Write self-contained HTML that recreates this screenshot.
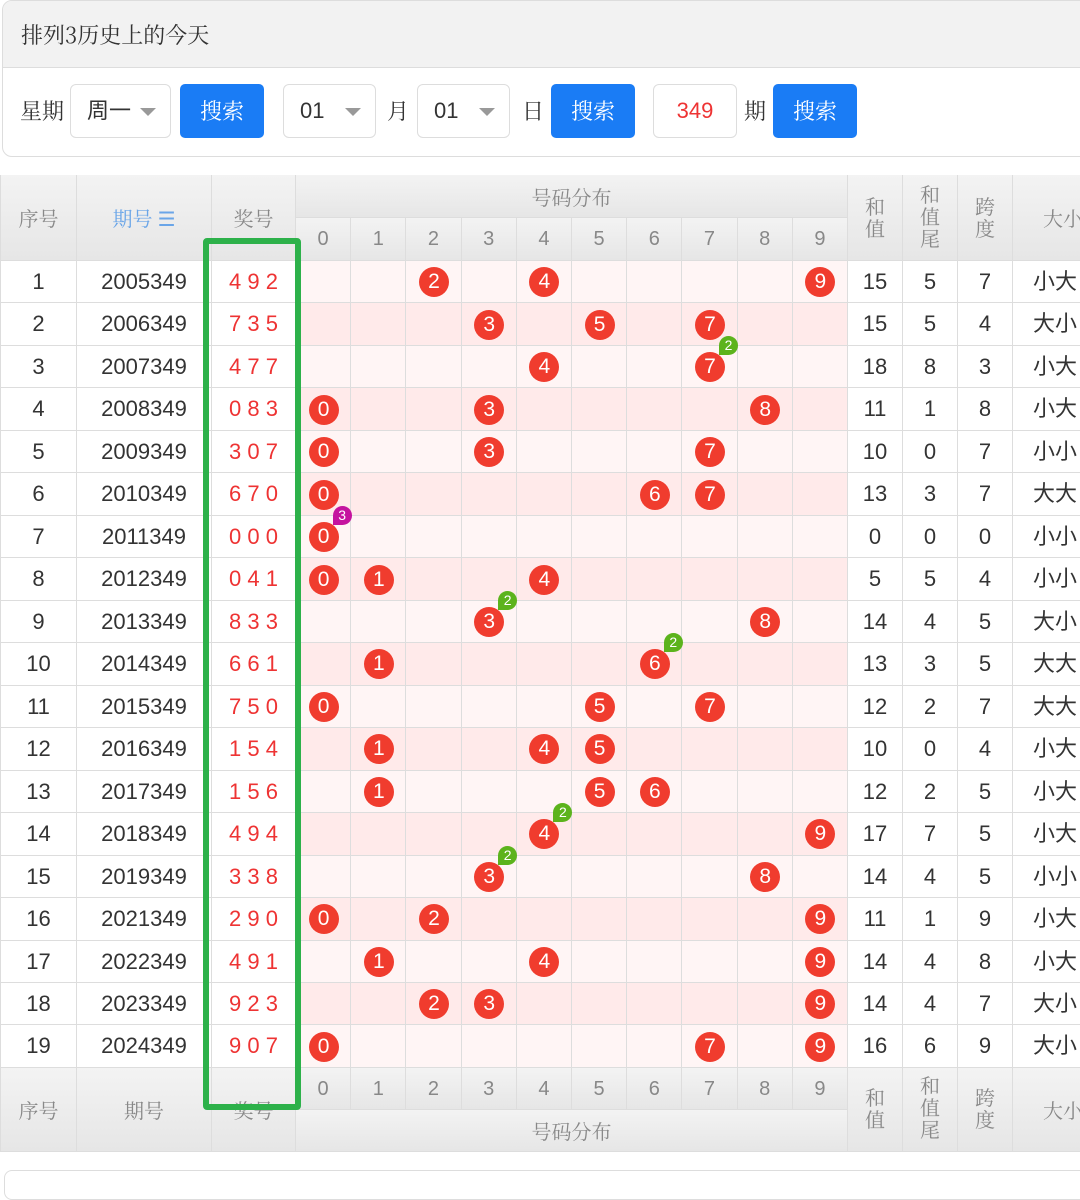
<!DOCTYPE html>
<html><head><meta charset="utf-8">
<style>
*{margin:0;padding:0;box-sizing:border-box}
body{width:1080px;height:1176px;overflow:hidden;background:#fff;font-family:"Liberation Sans","Noto Sans CJK SC",sans-serif;position:relative}
.card{position:absolute;left:2px;top:0;width:1090px;height:157px;border:1px solid #ddd;border-radius:10px;overflow:hidden}
.card .hd{height:67px;background:#f2f2f2;border-bottom:1px solid #ddd;font:22px "Noto Serif CJK SC","Noto Sans CJK SC",serif;color:#333;padding:18px 0 0 18px}
.lbl{position:absolute;top:96px;font:22px "Noto Serif CJK SC","Noto Sans CJK SC",serif;color:#333;line-height:30px;top:96px}
.sel{position:absolute;top:84px;height:54px;border:1px solid #ddd;border-radius:6px;background:#fff;font-size:22px;color:#333;padding-left:16px;line-height:52px}
.sel.a:after{content:"";position:absolute;right:14px;top:23px;border-left:8px solid transparent;border-right:8px solid transparent;border-top:8px solid #999}
.btn{position:absolute;top:84px;height:54px;background:#1a7cf5;border-radius:5px;color:#fff;font:22px "Noto Serif CJK SC","Noto Sans CJK SC",serif;text-align:center;line-height:54px;width:84px}
.c{position:absolute;border-right:1px solid #ddd;border-bottom:1px solid #ddd;text-align:center;color:#333;font-size:22px;overflow:hidden;white-space:nowrap}
.h{background:linear-gradient(#f3f3f3,#e6e6e6);color:#888;font-family:"Noto Serif CJK SC","Noto Sans CJK SC",serif;font-size:20px;white-space:normal}
.hn{font-family:"Liberation Sans",sans-serif}
.ball{position:absolute;width:30px;height:30px;border-radius:50%;background:#f03c2e;color:#fff;font-size:21px;line-height:30px;text-align:center}
.bd{position:absolute;width:19px;height:19px;border-radius:50% 50% 50% 0;background:#5cb31c;color:#fff;font-size:14px;line-height:19px;text-align:center}
.green{position:absolute;left:203px;top:238px;width:98px;height:872px;border:6px solid #2db14a;border-radius:4px}
</style></head><body>
<div class="card"><div class="hd">排列3历史上的今天</div></div>
<div class="lbl" style="left:20px">星期</div>
<div class="sel a" style="left:70px;width:101px">周一</div>
<div class="btn" style="left:180px">搜索</div>
<div class="sel a" style="left:283px;width:93px">01</div>
<div class="lbl" style="left:387px">月</div>
<div class="sel a" style="left:417px;width:93px">01</div>
<div class="lbl" style="left:522px">日</div>
<div class="btn" style="left:551px">搜索</div>
<div class="sel" style="left:653px;width:84px;color:#e33;padding-left:0;text-align:center">349</div>
<div class="lbl" style="left:744px">期</div>
<div class="btn" style="left:773px">搜索</div>
<div id="t"></div>
<div class="green"></div>
<script>
var X=[0,77,212,296];for(var i=1;i<=10;i++)X.push(296+i*55.2);X.push(903,958,1013,1100);
var rows=[[2005349,"492"],[2006349,"735"],[2007349,"477"],[2008349,"083"],[2009349,"307"],[2010349,"670"],[2011349,"000"],[2012349,"041"],[2013349,"833"],[2014349,"661"],[2015349,"750"],[2016349,"154"],[2017349,"156"],[2018349,"494"],[2019349,"338"],[2021349,"290"],[2022349,"491"],[2023349,"923"],[2024349,"907"]];
var badges={3:[7,2,0],7:[0,3,1],9:[3,2,0],10:[6,2,0],14:[4,2,0],15:[3,2,0]};
var h="";
function cell(x1,x2,y1,y2,cls,txt,st){h+='<div class="c '+cls+'" style="left:'+x1+'px;top:'+y1+'px;width:'+(x2-x1)+'px;height:'+(y2-y1)+'px;'+(st||'')+'">'+txt+'</div>';}
var T=175,M=218,D=261,RH=42.47;
h+='<div style="position:absolute;left:0;top:'+T+'px;width:1100px;border-top:1px solid #ddd"></div>';
cell(0,77,T,D,"h","序号","line-height:86px;border-left:1px solid #ddd");
cell(77,212,T,D,"h","期号 <span style=\"font-family:Liberation Sans\">☰</span>","line-height:86px;color:#6aa5e8");
cell(212,296,T,D,"h","奖号","line-height:86px");
cell(296,848,T,M,"h","号码分布","line-height:43px");
for(var d=0;d<10;d++)cell(X[3+d],X[4+d],M,D,"h hn",d,"line-height:43px");
var vl=[["和<br>值",25],["和<br>值<br>尾",22],["跨<br>度",25],["大小",0]];
for(var k=0;k<4;k++)cell(X[13+k],X[14+k],T,D,"h",vl[k][0],k==3?"line-height:86px;text-align:left;padding-left:30px":"line-height:22px;padding-top:"+(k==1?8:20)+"px");
for(var r=0;r<19;r++){var y1=D+r*RH,y2=D+(r+1)*RH,n=rows[r][1].split("").map(Number),ev=(r%2==1);
 var lh="line-height:"+RH+"px;";
 cell(0,77,y1,y2,"",r+1,lh+"border-left:1px solid #ddd;background:#fff");
 cell(77,212,y1,y2,"",rows[r][0],lh+"background:#fff");
 cell(212,296,y1,y2,"",n.join(" "),lh+"background:#fff;color:#e33");
 for(var d=0;d<10;d++)cell(X[3+d],X[4+d],y1,y2,"","",'background:'+(ev?'#ffeaea':'#fff5f5'));
 var s=n[0]+n[1]+n[2],sp=Math.max.apply(0,n)-Math.min.apply(0,n),sz=n.slice(0,2).map(function(v){return v>=5?"大":"小"}).join("");
 cell(848,903,y1,y2,"",s,lh+"background:#fff");cell(903,958,y1,y2,"",s%10,lh+"background:#fff");cell(958,1013,y1,y2,"",sp,lh+"background:#fff");
 cell(1013,1100,y1,y2,"",sz,lh+"background:#fff;text-align:left;padding-left:20px");
 var seen={};n.forEach(function(v){if(seen[v])return;seen[v]=1;var cx=(X[3+v]+X[4+v])/2,cy=(y1+y2)/2;h+='<div class="ball" style="left:'+(cx-15)+'px;top:'+(cy-15)+'px">'+v+'</div>';});
 var b=badges[r+1];if(b){var cx=(X[3+b[0]]+X[4+b[0]])/2,cy=(y1+y2)/2;h+='<div class="bd" style="left:'+(cx+9)+'px;top:'+(cy-31)+'px;'+(b[2]?'background:#c5139f':'')+'">'+b[1]+'</div>';}
}
var F=D+19*RH,F2=F+42,F3=F+84;
cell(0,77,F,F3,"h","序号","line-height:84px;border-left:1px solid #ddd");
cell(77,212,F,F3,"h","期号","line-height:84px");
cell(212,296,F,F3,"h","奖号","line-height:84px");
for(var d=0;d<10;d++)cell(X[3+d],X[4+d],F,F2,"h hn",d,"line-height:42px");
cell(296,848,F2,F3,"h","号码分布","line-height:42px");
for(var k=0;k<4;k++)cell(X[13+k],X[14+k],F,F3,"h",vl[k][0],k==3?"line-height:84px;text-align:left;padding-left:30px":"line-height:22px;padding-top:"+(k==1?6:18)+"px");
h+='<div style="position:absolute;left:4px;top:1170px;width:1090px;height:30px;border:1px solid #ddd;border-radius:8px"></div>';
document.getElementById("t").innerHTML=h;
</script>
</body></html>
